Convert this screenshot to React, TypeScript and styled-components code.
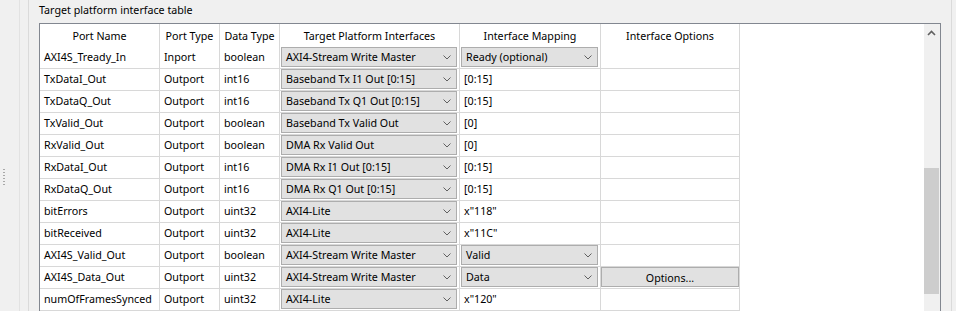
import React from 'react'
import styled, { createGlobalStyle } from 'styled-components'

type Row = {
  name: string
  portType: string
  dataType: string
  target: string
  mapping: string
  mappingCombo?: boolean
  options?: boolean
}

const rows: Row[] = [
  { name: 'AXI4S_Tready_In', portType: 'Inport', dataType: 'boolean', target: 'AXI4-Stream Write Master', mapping: 'Ready (optional)', mappingCombo: true },
  { name: 'TxDataI_Out', portType: 'Outport', dataType: 'int16', target: 'Baseband Tx I1 Out [0:15]', mapping: '[0:15]' },
  { name: 'TxDataQ_Out', portType: 'Outport', dataType: 'int16', target: 'Baseband Tx Q1 Out [0:15]', mapping: '[0:15]' },
  { name: 'TxValid_Out', portType: 'Outport', dataType: 'boolean', target: 'Baseband Tx Valid Out', mapping: '[0]' },
  { name: 'RxValid_Out', portType: 'Outport', dataType: 'boolean', target: 'DMA Rx Valid Out', mapping: '[0]' },
  { name: 'RxDataI_Out', portType: 'Outport', dataType: 'int16', target: 'DMA Rx I1 Out [0:15]', mapping: '[0:15]' },
  { name: 'RxDataQ_Out', portType: 'Outport', dataType: 'int16', target: 'DMA Rx Q1 Out [0:15]', mapping: '[0:15]' },
  { name: 'bitErrors', portType: 'Outport', dataType: 'uint32', target: 'AXI4-Lite', mapping: 'x"118"' },
  { name: 'bitReceived', portType: 'Outport', dataType: 'uint32', target: 'AXI4-Lite', mapping: 'x"11C"' },
  { name: 'AXI4S_Valid_Out', portType: 'Outport', dataType: 'boolean', target: 'AXI4-Stream Write Master', mapping: 'Valid', mappingCombo: true },
  { name: 'AXI4S_Data_Out', portType: 'Outport', dataType: 'uint32', target: 'AXI4-Stream Write Master', mapping: 'Data', mappingCombo: true, options: true },
  { name: 'numOfFramesSynced', portType: 'Outport', dataType: 'uint32', target: 'AXI4-Lite', mapping: 'x"120"' },
]

const columns = ['Port Name', 'Port Type', 'Data Type', 'Target Platform Interfaces', 'Interface Mapping', 'Interface Options']

const Chevron = () => (
  <svg width="8" height="5" viewBox="0 0 8 5">
    <polyline points="0.5,0.5 4,4 7.5,0.5" fill="none" stroke="#606060" strokeWidth="1" />
  </svg>
)

const Combo: React.FC<{ label: string }> = ({ label }) => (
  <ComboBox>
    <span>{label}</span>
    <Chevron />
  </ComboBox>
)

export default function App(): JSX.Element {
  return (
    <>
      <GlobalStyle />
      <Page>
        <GripZone>
          <Grip />
        </GripZone>
        <InnerGutter />
        <Panel>
          <Title>Target platform interface table</Title>
          <TableBox>
            <Grid>
              {columns.map(c => (
                <HeadCell key={c}>{c}</HeadCell>
              ))}
              {rows.map(r => (
                <React.Fragment key={r.name}>
                  <Cell>{r.name}</Cell>
                  <Cell>{r.portType}</Cell>
                  <Cell>{r.dataType}</Cell>
                  <Cell>
                    <Combo label={r.target} />
                  </Cell>
                  <Cell>{r.mappingCombo ? <Combo label={r.mapping} /> : r.mapping}</Cell>
                  <Cell>{r.options && <OptionsButton>Options...</OptionsButton>}</Cell>
                </React.Fragment>
              ))}
            </Grid>
            <ScrollBar>
              <ScrollArrow>
                <svg width="9" height="6" viewBox="0 0 9 6">
                  <polyline points="1,5 4.5,1.5 8,5" fill="none" stroke="#606060" strokeWidth="1.6" />
                </svg>
              </ScrollArrow>
              <Thumb />
            </ScrollBar>
          </TableBox>
        </Panel>
        <RightStrip />
      </Page>
    </>
  )
}

const GlobalStyle = createGlobalStyle`
  body {
    margin: 0;
    background: #f0f0f0;
    font-family: 'Noto Sans', 'Open Sans', sans-serif;
    font-size: 10.7px;
    color: #000;
  }
`

const Page = styled.div`
  display: flex;
  width: 956px;
  height: 311px;
  overflow: hidden;
  background: #f0f0f0;
`

const GripZone = styled.div`
  box-sizing: border-box;
  width: 20px;
  border-right: 1px solid #e2e2e2;
  display: flex;
  align-items: center;
  padding-left: 3px;
`

const Grip = styled.div`
  width: 2px;
  height: 17px;
  margin-top: 43px;
  background-image: repeating-linear-gradient(to bottom, #a8a8a8 0 1px, transparent 1px 3px);
`

const InnerGutter = styled.div`
  box-sizing: border-box;
  width: 9px;
  border-right: 1px solid #dadada;
`

const Panel = styled.div`
  width: 912px;
  padding-left: 10px;
  box-sizing: border-box;
  display: flex;
  flex-direction: column;
`

const Title = styled.div`
  height: 23px;
  line-height: 20px;
  white-space: nowrap;
`

const TableBox = styled.div`
  flex: 1;
  display: flex;
  border: 1px solid #828790;
  border-bottom: none;
  background: #fff;
  overflow: hidden;
`

const Grid = styled.div`
  flex: 1;
  display: grid;
  grid-template-columns: 120px 60px 60px 180px 141px 139px;
  grid-template-rows: 23px;
  grid-auto-rows: 22px;
  align-content: start;
`

const HeadCell = styled.div`
  border-right: 1px solid #d8d8d8;
  display: flex;
  align-items: center;
  justify-content: center;
  white-space: nowrap;
`

const Cell = styled.div`
  border-right: 1px solid #d8d8d8;
  border-bottom: 1px solid #d8d8d8;
  display: flex;
  align-items: flex-start;
  padding-left: 4px;
  line-height: 20px;
  white-space: nowrap;
  overflow: hidden;

  &:has(> button),
  &:has(> div) {
    padding-left: 0;
  }
`

const ComboBox = styled.div`
  box-sizing: border-box;
  flex: 1;
  height: 20px;
  margin: 0 2px 0 1px;
  padding: 0 4px 0 4px;
  display: flex;
  align-items: center;
  justify-content: space-between;
  background: #e1e1e1;
  border: 1px solid #adadad;

  span {
    line-height: 18px;
  }

  svg {
    margin-right: 1px;
  }
`

const OptionsButton = styled.button`
  box-sizing: border-box;
  flex: 1;
  height: 20px;
  margin: 0;
  padding: 0;
  background: #e1e1e1;
  border: 1px solid #adadad;
  font: inherit;
  color: #000;
`

const ScrollBar = styled.div`
  width: 16px;
  background: #f0f0f0;
  display: flex;
  flex-direction: column;
`

const ScrollArrow = styled.div`
  height: 17px;
  display: flex;
  align-items: center;
  justify-content: center;
  padding-right: 1px;
`

const Thumb = styled.div`
  width: 15px;
  height: 126px;
  margin-top: 127px;
  background: #cdcdcd;
`

const RightStrip = styled.div`
  box-sizing: border-box;
  width: 11px;
  border-right: 1px solid #dadada;
`
